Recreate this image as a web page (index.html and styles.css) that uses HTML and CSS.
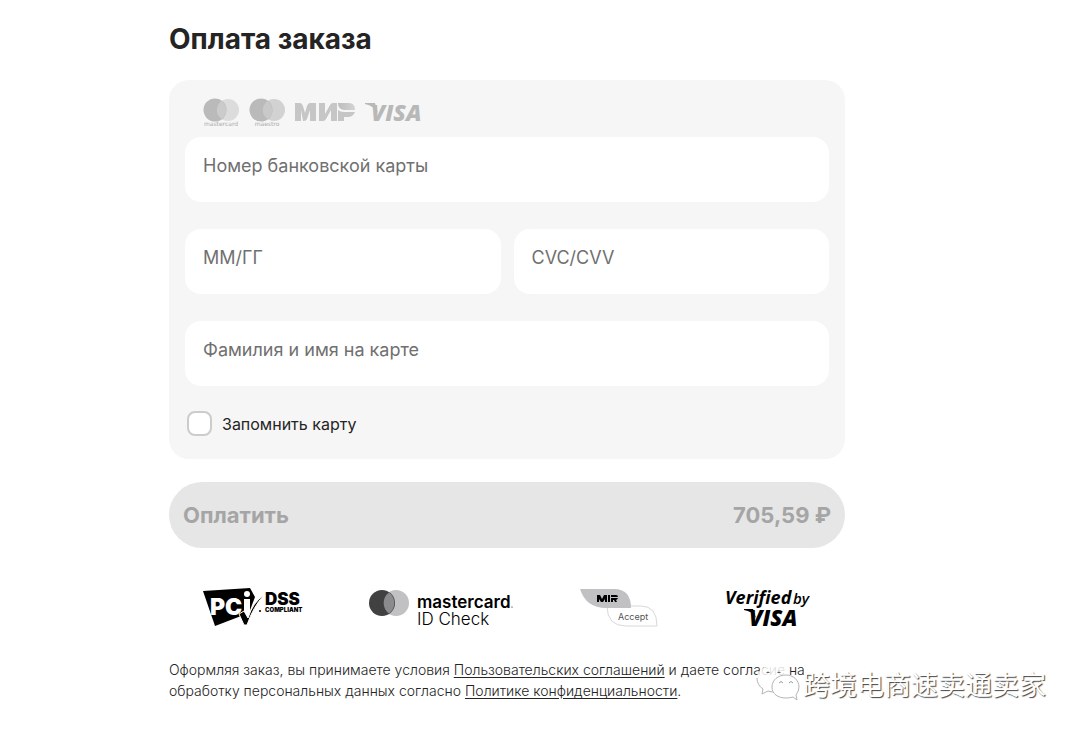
FILE: index.html
```html
<!DOCTYPE html>
<html lang="ru">
<head>
<meta charset="utf-8">
<meta name="viewport" content="width=device-width, initial-scale=1">
<title>Оплата заказа</title>
<link rel="stylesheet" href="styles.css">
</head>
<body>
<main class="checkout">
  <h1 class="title">Оплата заказа</h1>
  <form class="form">
    <section class="card">
      <div class="systems">
        <svg width="37" height="31" viewBox="0 0 37 31" role="img" aria-label="mastercard">
          <circle cx="25" cy="12" r="11" fill="#dcdcdc"/><circle cx="12" cy="12" r="11.5" fill="#bababa"/>
          <path d="M18.500 3a11 11 0 0 1 0 18a11 11 0 0 1 0-18z" fill="#cbcbcb"/>
          <text class="brand-small" x="18" y="28" text-anchor="middle">mastercard</text>
        </svg>
        <svg width="37" height="31" viewBox="0 0 37 31" role="img" aria-label="maestro">
          <circle cx="25" cy="12" r="11" fill="#d2d2d2"/><circle cx="12" cy="12" r="11.5" fill="#bababa"/>
          <path d="M18.500 3a11 11 0 0 1 0 18a11 11 0 0 1 0-18z" fill="#c9c9c9"/>
          <text class="brand-small" x="18" y="28" text-anchor="middle">maestro</text>
        </svg>
        <svg width="61" height="31" viewBox="0 0 61 31" role="img" aria-label="МИР">
          <defs><linearGradient id="mir-shade"><stop stop-color="#bdbdbd"/><stop offset="1" stop-color="#d3d3d3"/></linearGradient></defs>
          <path fill="#c6c6c6" d="M0 5h5q2 0 3 3l2 7 2-7q1-3 3-3h6v18h-6V12l-3 9q-1 2-3 2H8l-2-11v11H0zM24 5h6v11l5-9q1-2 3-2h4v18h-6V12l-5 9q-1 2-3 2h-4zM43 12q2 2 6 2h11q-2 5-7 5h-4v4h-6z"/>
          <path fill="url(#mir-shade)" d="M43 5h11q6 0 6 7H49q-6-1-6-7z"/>
        </svg>
        <svg width="62" height="31" viewBox="0 0 62 31" role="img" aria-label="VISA">
          <path fill="#b8b8b8" d="M0 5h10l3 10Q9 8 0 6z"/>
          <text class="visa-pale" x="6" y="23">VISA</text>
        </svg>
      </div>
      <div class="fields">
        <input class="field wide" type="text" placeholder="Номер банковской карты" aria-label="Номер банковской карты">
        <input class="field" type="text" placeholder="ММ/ГГ" aria-label="ММ/ГГ">
        <input class="field" type="text" placeholder="CVC/CVV" aria-label="CVC/CVV">
        <input class="field wide" type="text" placeholder="Фамилия и имя на карте" aria-label="Фамилия и имя на карте">
      </div>
      <label class="remember"><input class="check" type="checkbox"><span>Запомнить карту</span></label>
    </section>
    <button class="pay" type="submit" disabled><span>Оплатить</span><span class="sum">705,59 ₽</span></button>
  </form>
  <div class="badges">
    <svg width="98" height="40" viewBox="0 0 98 40" role="img" aria-label="PCI DSS Compliant">
      <path d="M0 3L47 0 52 9l-6 16-34 13z"/>
      <text class="pci" x="7" y="27">PC</text>
      <path fill="#fff" d="M41 11h6v16h-6z"/><circle cx="44" cy="6" r="3" fill="#fff"/>
      <path d="M36 26l5-3 4 7Q50 14 61 7Q50 19 44 37h-3z" stroke="#fff"/>
      <circle cx="57" cy="23" r="1"/>
      <text class="dss" x="62" y="17">DSS</text>
      <text class="compliant" x="62" y="24">COMPLIANT</text>
    </svg>
    <svg width="145" height="40" viewBox="0 0 145 40" role="img" aria-label="mastercard ID Check">
      <circle cx="28" cy="15" r="13" fill="#c1c1c3"/><circle cx="14" cy="15" r="13" fill="#414141"/>
      <path d="M21 4.500a13 13 0 0 1 0 21a13 13 0 0 1 0-21z" fill="#8b8b8e"/>
      <text class="mc-name" x="49" y="20">mastercard</text><circle cx="144" cy="19" r=".6"/>
      <text class="mc-check" x="49" y="37">ID Check</text>
    </svg>
    <svg width="78" height="40" viewBox="0 0 78 40" role="img" aria-label="MIR Accept">
      <path fill="#fff" stroke="#d8d8d8" d="M27 18h34q16 0 16 20H46Q27 38 27 18z"/>
      <path fill="#c1c1c3" d="M0 1h34q17 0 17 19H26Q6 20 0 1z"/>
      <path d="M17 7h3l2 4 2-4h3v7h-2v-3l-2 3h-2l-2-3v3h-2zM28 7h2v7h-2zM31 7h5q2 0 2 2H31zM31 10h7q-1 2-2 2l1 2h-2l-1-2h-1v2h-2z"/>
      <text class="accept" x="38" y="32">Accept</text>
    </svg>
    <svg width="86" height="40" viewBox="0 0 86 40" role="img" aria-label="Verified by VISA">
      <text class="verified" x="0" y="16">Verified</text><text class="by" x="68" y="16">by</text>
      <path d="M19 21h9l3 9Q27 23 19 22z"/>
      <text class="visa-dark" x="24" y="38">VISA</text>
    </svg>
  </div>
  <p class="legal">Оформляя заказ, вы принимаете условия <a href="#">Пользовательских соглашений</a> и даете согласие на обработку персональных данных согласно <a href="#">Политике конфиденциальности</a>.</p>
</main>
<div class="watermark">
  <svg width="44" height="40" viewBox="0 0 44 40" aria-hidden="true">
    <path class="bubble-back" d="M17 1C8 1 1 7 1 14q0 7 6 11l-1 5 6-3q5 2 11 0Q34 23 34 13 31 1 17 1z"/>
    <path class="bubble-edge" d="M1 14q0 7 6 11l-1 5 6-3q3 1 6 1"/>
    <path class="bubble" d="M30 11c-8 0-14 5-14 12s6 11 14 11q4 0 7-1l4 3-1-5q3-4 3-8c0-7-6-12-13-12z"/>
    <path class="bubble-line" d="M23 19q2-3 4 0M33 19q2-3 4 0"/>
    <path class="bubble-eye" d="M10 9q2-3 4 0zM21 9q2-3 4 0z"/>
  </svg>
  <span>跨境电商速卖通卖家</span>
</div>
</body>
</html>
```
FILE: styles.css
```css
* { box-sizing: border-box; }
body { margin: 0; background: #fff; color: #242424; font-family: Inter, "Noto Sans CJK SC", sans-serif; }
.checkout { max-width: 845px; padding: 20px 0 28px 169px; }
.title { margin: 0 0 22px; font-size: 28px; line-height: 38px; font-weight: 700; }
.card { padding: 14px 16px 23px; border-radius: 20px; background: #f6f6f6; }
.systems { display: flex; gap: 9px; height: 31px; margin: 4px 0 8px 18px; }
.fields { display: grid; grid-template-columns: 1fr 1fr; gap: 27px 13px; }
.wide { grid-column: 1 / -1; }
.field { width: 100%; min-width: 0; height: 65px; padding: 0 18px 8px; border: 0; border-radius: 16px; background: #fff; color: #242424; font: 400 18px Inter, sans-serif; }
.field::placeholder { color: #707070; opacity: 1; }
.remember { display: flex; align-items: center; gap: 10px; margin: 25px 0 0 2px; font-size: 16px; line-height: 24px; }
.check { appearance: none; width: 25px; height: 25px; margin: 0; border: 2px solid #ccc; border-radius: 8px; background: #fff; }
.check:checked { background: #777; }
.pay { display: flex; justify-content: space-between; align-items: center; width: 100%; height: 66px; margin-top: 23px; padding: 0 14px; border: 0; border-radius: 33px; background: #e6e6e6; color: #a5a5a5; font: 700 22px Inter, sans-serif; }
.badges { display: flex; justify-content: space-between; margin: 40px 34px 0; }
.badges svg, .systems svg { overflow: visible; }
.legal { margin: 31px 0 0; font-size: 14px; line-height: 21px; font-weight: 300; }
.legal a { color: inherit; text-underline-offset: 2px; }
.brand-small { font: 6px "DejaVu Sans", sans-serif; fill: #aaa; }
.visa-pale { font: italic 800 23px "Open Sans", sans-serif; fill: #b8b8b8; }
.pci { font: 900 23px Inter, sans-serif; fill: #fff; }
.dss { font: 900 17px Inter, sans-serif; }
.compliant { font: 900 6px Inter, sans-serif; }
.mc-name { font: 600 17px Inter, sans-serif; }
.mc-check { font: 300 17px Inter, sans-serif; }
.accept { font: 9px Inter, sans-serif; fill: #555; }
.verified { font: italic 700 18px "Open Sans", sans-serif; }
.by { font: italic 600 15px "Open Sans", sans-serif; }
.visa-dark { font: italic 800 22px "Open Sans", sans-serif; }
.watermark { position: absolute; left: 756px; top: 664px; display: flex; align-items: center; gap: 3px; color: #fff; font: 400 27px/36px "Noto Sans CJK SC", sans-serif; text-shadow: 1px 1px 1px #444; white-space: nowrap; }
.bubble-back { fill: #fff; fill-opacity: .85; }
.bubble { fill: #fff; stroke: #b5b5b5; }
.bubble-edge { fill: none; stroke: #b5b5b5; }
.bubble-line { fill: none; stroke: #999; }
.bubble-eye { fill: #666; }
```
